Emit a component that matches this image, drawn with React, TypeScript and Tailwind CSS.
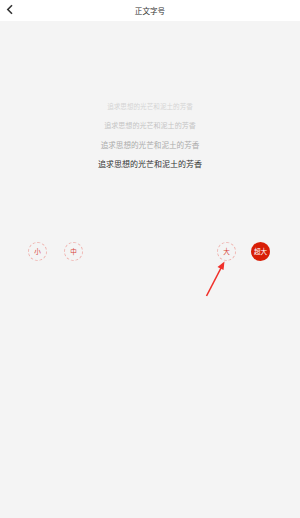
import React from 'react';

const lines = [
  { size: 'text-[6.6px]', color: 'text-[#d4d4d4]' },
  { size: 'text-[7.05px]', color: 'text-[#c4c4c4]' },
  { size: 'text-[7.6px]', color: 'text-[#ababab]' },
  { size: 'text-[8px]', color: 'text-[#333333]' },
];

function SizeDot({ label, active = false }: { label: string; active?: boolean }) {
  return (
    <div
      className={
        active
          ? 'w-[19px] h-[19px] rounded-full bg-[#d81e06] text-white flex items-center justify-center text-[6.6px]'
          : 'w-[19px] h-[19px] rounded-full border border-dashed border-[#efb4b0] text-[#d8453a] flex items-center justify-center text-[6.6px]'
      }
    >
      {label}
    </div>
  );
}

export default function App() {
  return (
    <div
      className="relative w-[300px] h-[518px] bg-[#f4f4f4] overflow-hidden"
      style={{ fontFamily: '"Noto Sans CJK SC", "Noto Sans", sans-serif' }}
    >
      {/* header */}
      <div className="h-[21px] bg-white flex items-center relative">
        <svg className="absolute left-[6px] top-[4px]" width="8" height="11" viewBox="0 0 8 11">
          <path d="M6 1.2 L1.8 5.5 L6 9.8" fill="none" stroke="#333" strokeWidth="1.6" />
        </svg>
        <div className="flex-1 text-center text-[7.6px] text-[#333]">正文字号</div>
      </div>

      {/* sample text */}
      <div className="pt-[76px] flex flex-col items-center">
        {lines.map((l, i) => (
          <div key={i} className={`h-[19px] flex items-center ${l.size} ${l.color}`}>
            追求思想的光芒和泥土的芳香
          </div>
        ))}
      </div>

      {/* size picker */}
      <div className="mt-[69px] flex justify-between pl-[28px] pr-[30px]">
        <div className="flex gap-[17px]">
          <SizeDot label="小" />
          <SizeDot label="中" />
        </div>
        <div className="flex gap-[15px]">
          <SizeDot label="大" />
          <SizeDot label="超大" active />
        </div>
      </div>

      {/* annotation arrow */}
      <svg className="absolute left-0 top-0" width="300" height="518" viewBox="0 0 300 518">
        <path d="M206.5 296 L221 268" stroke="#f0302a" strokeWidth="1.6" fill="none" />
        <path d="M224.5 261.5 L217.5 267 L223.5 270 Z" fill="#f0302a" />
      </svg>
    </div>
  );
}
